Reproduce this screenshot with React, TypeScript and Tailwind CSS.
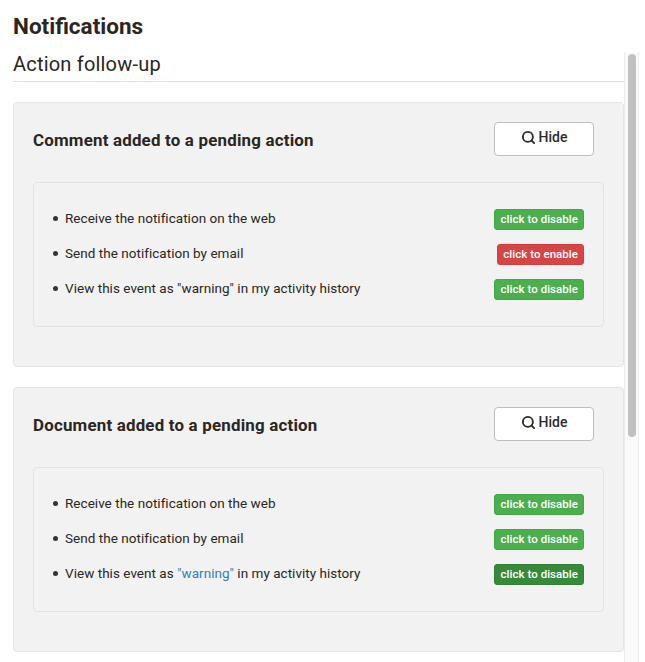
import { Search } from "lucide-react";

type Row = { text: React.ReactNode; label: string; tone: "green" | "red" | "dark" };

const toneClass = {
  green: "bg-[#4cae4f] border-[#46a549]",
  red: "bg-[#d64545] border-[#cf4040]",
  dark: "bg-[#39893c] border-[#347f37]",
};

function Card({ title, rows }: { title: string; rows: Row[] }) {
  return (
    <section className="h-[265px] rounded-[4px] border border-[#e3e3e3] bg-[#f2f2f2] px-[19px] pt-[19px]">
      <div className="flex h-[34px] items-center justify-between pr-[10px]">
        <h3 className="pt-[3px] text-[16.9px] font-bold tracking-[0.2px] text-[#2b2622]">{title}</h3>
        <button className="flex h-[34px] w-[100px] items-center justify-center gap-[3px] rounded-[4px] border border-[#bdbdbd] bg-white pb-[3px] text-[14px] font-medium text-[#2b2b2b]">
          <Search size={15} strokeWidth={3} />
          Hide
        </button>
      </div>
      <div className="mt-[26px] h-[145px] rounded-[4px] border border-[#e3e3e3] px-[19px] pt-[26px]">
        <ul className="flex flex-col gap-[14px]">
          {rows.map((r, i) => (
            <li key={i} className="flex h-[21px] items-center justify-between text-[13.5px] tracking-[0.03px] text-[#2b2622]">
              <span className="flex items-center pb-[2px]">
                <span className="mr-[7px] h-[5px] w-[5px] rounded-full bg-[#333]" />
                <span>{r.text}</span>
              </span>
              <span
                className={`rounded-[3px] border px-[5px] py-[2px] text-[11.5px] font-medium leading-[15px] tracking-[0.04px] text-white ${toneClass[r.tone]}`}
              >
                {r.label}
              </span>
            </li>
          ))}
        </ul>
      </div>
    </section>
  );
}

export default function App() {
  return (
    <div className="h-[662px] w-[645px] overflow-hidden bg-white font-['Roboto',sans-serif]">
      <h1 className="pl-[13px] pt-[13px] text-[22.5px] font-bold leading-[26px] text-[#2b2622]">Notifications</h1>
      <div className="mt-[13px] flex">
        <main className="ml-[13px] w-[611px] shrink-0">
          <h2 className="border-b border-[#e0e0e0] pb-[5px] text-[20px] leading-[24px] tracking-[0.2px] text-[#2b2622]">Action follow-up</h2>
          <div className="mt-[20px] flex flex-col gap-[20px]">
            <Card
              title="Comment added to a pending action"
              rows={[
                { text: "Receive the notification on the web", label: "click to disable", tone: "green" },
                { text: "Send the notification by email", label: "click to enable", tone: "red" },
                { text: 'View this event as "warning" in my activity history', label: "click to disable", tone: "green" },
              ]}
            />
            <Card
              title="Document added to a pending action"
              rows={[
                { text: "Receive the notification on the web", label: "click to disable", tone: "green" },
                { text: "Send the notification by email", label: "click to disable", tone: "green" },
                {
                  text: (
                    <>
                      View this event as <span className="text-[#2f7fc1]">"warning"</span> in my activity history
                    </>
                  ),
                  label: "click to disable",
                  tone: "dark",
                },
              ]}
            />
          </div>
        </main>
        <div className="h-[620px] w-[15px] shrink-0 border-x border-[#ececec] bg-[#fafafa] pl-[3px] pt-[2px]">
          <div className="h-[383px] w-[8px] rounded-full bg-[#c1c1c1]" />
        </div>
      </div>
    </div>
  );
}
